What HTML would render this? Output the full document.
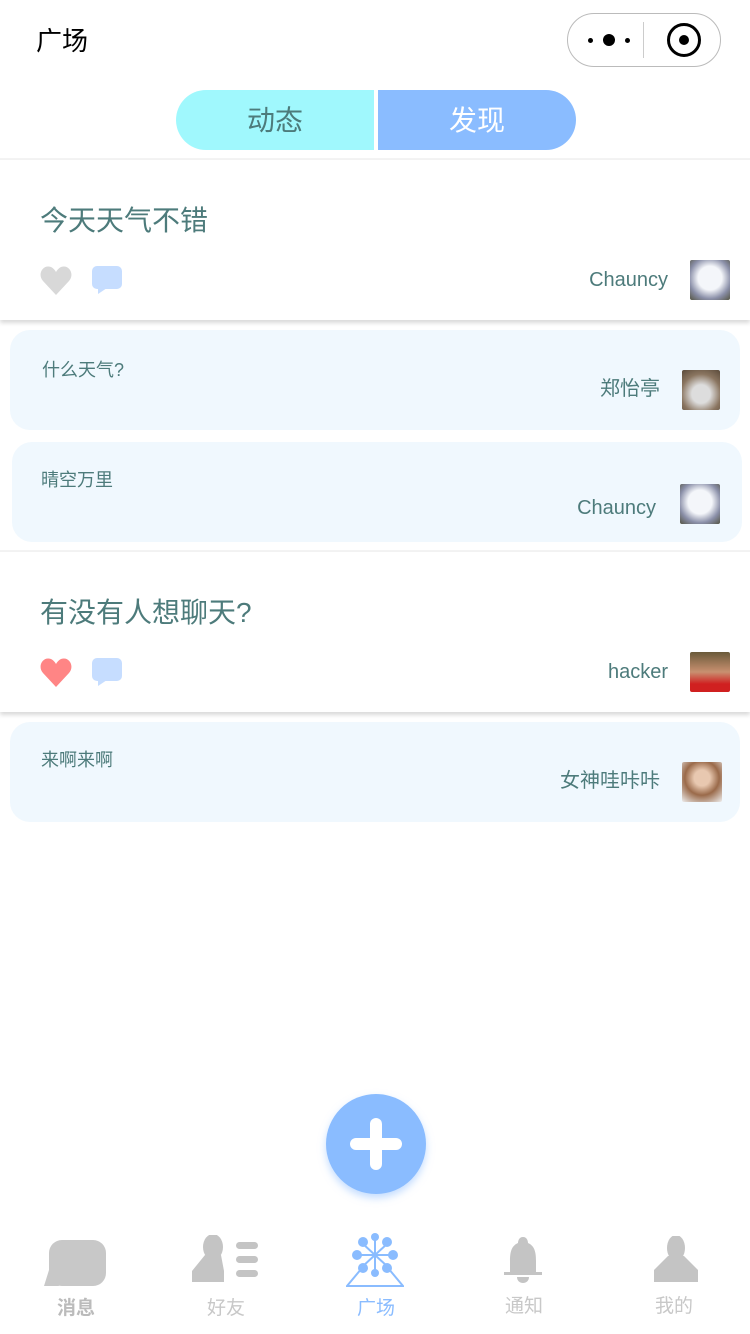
<!DOCTYPE html>
<html><head><meta charset="utf-8"><style>
*{margin:0;padding:0;box-sizing:border-box}
body{width:750px;height:1334px;background:#fff;position:relative;overflow:hidden;font-family:"Liberation Sans","Noto Sans CJK SC",sans-serif;color:#4d7b7b}
.a{position:absolute}
.t{white-space:nowrap;line-height:1}
.av{position:absolute;border-radius:2px}
.cm{position:absolute;background:#f0f8fe;border-radius:20px}
.lbl{position:absolute;top:1299px;font-size:19px;color:#c8c8c8;width:80px;text-align:center;line-height:1}
</style></head><body>
<div class="a t" style="left:36px;top:28px;font-size:26px;color:#000">广场</div>
<div class="a" style="left:567px;top:13px;width:154px;height:54px;border:1px solid #bbb;border-radius:27px"></div>
<div class="a" style="left:588px;top:38px;width:5px;height:5px;border-radius:50%;background:#000"></div>
<div class="a" style="left:603px;top:34px;width:12px;height:12px;border-radius:50%;background:#000"></div>
<div class="a" style="left:625px;top:38px;width:5px;height:5px;border-radius:50%;background:#000"></div>
<div class="a" style="left:643px;top:22px;width:1px;height:36px;background:#ccc"></div>
<div class="a" style="left:667px;top:23px;width:34px;height:34px;border-radius:50%;border:3px solid #000"></div>
<div class="a" style="left:679px;top:35px;width:10px;height:10px;border-radius:50%;background:#000"></div>

<div class="a" style="left:176px;top:90px;width:198px;height:60px;background:#a0f8fd;border-radius:30px 0 0 30px;font-size:28px;text-align:center;line-height:62px;color:#4d7b7b">动态</div>
<div class="a" style="left:378px;top:90px;width:198px;height:60px;background:#8abcff;border-radius:0 30px 30px 0;font-size:28px;text-align:center;line-height:62px;color:#fff">发现</div>
<div class="a" style="left:0;top:158px;width:750px;height:2px;background:#f3f3f3"></div>

<div class="a" style="left:0;top:160px;width:750px;height:160px;box-shadow:0 3px 4px rgba(0,0,0,.15);background:#fff"></div>
<div class="a t" style="left:40px;top:207px;font-size:28px">今天天气不错</div>
<svg class="a" style="left:40px;top:266px" width="32" height="29" viewBox="0 0 32 29"><path d="M16 29 L3 15 C-3 8 3 -2 11 1 C13 2 15 4 16 6 C17 4 19 2 21 1 C29 -2 35 8 29 15 Z" fill="#d8d8d8"/></svg>
<svg class="a" style="left:92px;top:266px" width="30" height="28" viewBox="0 0 30 28"><rect width="30" height="23" rx="5" fill="#c6ddff"/><path d="M6 22 L6 28 L15 22Z" fill="#c6ddff"/></svg>
<div class="a t" style="right:82px;top:270px;font-size:20px">Chauncy</div>
<div class="av" style="left:690px;top:260px;width:40px;height:40px;background:radial-gradient(circle at 50% 45%,#f4f6fa 40%,#8a8fa8 70%,#554)"></div>

<div class="cm" style="left:10px;top:330px;width:730px;height:100px"></div>
<div class="a t" style="left:42px;top:361px;font-size:18px">什么天气?</div>
<div class="a t" style="right:90px;top:379px;font-size:20px">郑怡亭</div>
<div class="av" style="left:682px;top:370px;width:38px;height:40px;background:radial-gradient(circle at 50% 60%,#ddd 30%,#8a7560 65%,#5a4a3a)"></div>

<div class="cm" style="left:12px;top:442px;width:730px;height:100px"></div>
<div class="a t" style="left:41px;top:471px;font-size:18px">晴空万里</div>
<div class="a t" style="right:94px;top:498px;font-size:20px">Chauncy</div>
<div class="av" style="left:680px;top:484px;width:40px;height:40px;background:radial-gradient(circle at 50% 45%,#f4f6fa 40%,#8a8fa8 70%,#554)"></div>
<div class="a" style="left:0;top:550px;width:750px;height:2px;background:#f3f3f3"></div>

<div class="a" style="left:0;top:552px;width:750px;height:160px;box-shadow:0 3px 4px rgba(0,0,0,.15);background:#fff"></div>
<div class="a t" style="left:40px;top:599px;font-size:28px">有没有人想聊天?</div>
<svg class="a" style="left:40px;top:658px" width="32" height="29" viewBox="0 0 32 29"><path d="M16 29 L3 15 C-3 8 3 -2 11 1 C13 2 15 4 16 6 C17 4 19 2 21 1 C29 -2 35 8 29 15 Z" fill="#ff8585"/></svg>
<svg class="a" style="left:92px;top:658px" width="30" height="28" viewBox="0 0 30 28"><rect width="30" height="23" rx="5" fill="#c6ddff"/><path d="M6 22 L6 28 L15 22Z" fill="#c6ddff"/></svg>
<div class="a t" style="right:82px;top:662px;font-size:20px">hacker</div>
<div class="av" style="left:690px;top:652px;width:40px;height:40px;background:linear-gradient(#6a5a3a,#c89070 50%,#d02020 80%)"></div>

<div class="cm" style="left:10px;top:722px;width:730px;height:100px"></div>
<div class="a t" style="left:41px;top:751px;font-size:18px">来啊来啊</div>
<div class="a t" style="right:90px;top:771px;font-size:20px">女神哇咔咔</div>
<div class="av" style="left:682px;top:762px;width:40px;height:40px;background:radial-gradient(circle at 50% 40%,#e8c8b0 25%,#9a6a4a 55%,#eee)"></div>

<div class="a" style="left:326px;top:1094px;width:100px;height:100px;border-radius:50%;background:#8abcff;box-shadow:0 4px 8px rgba(138,188,255,.5)"></div>
<div class="a" style="left:350px;top:1138px;width:52px;height:12px;border-radius:6px;background:#fff"></div>
<div class="a" style="left:370px;top:1118px;width:12px;height:52px;border-radius:6px;background:#fff"></div>

<svg class="a" style="left:44px;top:1240px" width="62" height="46" viewBox="0 0 62 46"><rect x="5" y="0" width="57" height="46" rx="13" fill="#c8c8c8"/><path d="M5 30 L0 46 L15 46Z" fill="#c8c8c8"/></svg>
<svg class="a" style="left:192px;top:1235px" width="68" height="47" viewBox="0 0 68 47"><ellipse cx="21" cy="12" rx="10" ry="13" fill="#c4c4c4"/><path d="M13 20 L0 36 V47 H32 V36 L29 20Z" fill="#c4c4c4"/><rect x="44" y="7" width="22" height="7" rx="3.5" fill="#c4c4c4"/><rect x="44" y="21" width="22" height="7" rx="3.5" fill="#c4c4c4"/><rect x="44" y="35" width="22" height="7" rx="3.5" fill="#c4c4c4"/></svg>
<svg class="a" style="left:346px;top:1233px" width="58" height="54" viewBox="0 0 58 54"><g stroke="#8abcff" stroke-width="2" fill="none"><line x1="29" y1="5" x2="29" y2="37"/><line x1="12" y1="22" x2="46" y2="22"/><line x1="16" y1="10" x2="42" y2="34"/><line x1="42" y1="10" x2="16" y2="34"/><path d="M16 35 L1 53 H57 L42 35"/></g><g fill="#8abcff"><circle cx="29" cy="4" r="4"/><circle cx="17" cy="9" r="5"/><circle cx="41" cy="9" r="5"/><circle cx="11" cy="22" r="5"/><circle cx="47" cy="22" r="5"/><circle cx="17" cy="35" r="5"/><circle cx="41" cy="35" r="5"/><circle cx="29" cy="40" r="4"/></g></svg>
<svg class="a" style="left:504px;top:1237px" width="38" height="46" viewBox="0 0 38 46"><path d="M19 0 C15 0 14 4 14 6 C7 9 6 16 6 24 V36 H32 V24 C32 16 31 9 24 6 C24 4 23 0 19 0Z" fill="#c4c4c4"/><rect x="0" y="35" width="38" height="3" fill="#c4c4c4"/><path d="M13 40 H25 C25 44 22 46 19 46 C16 46 13 44 13 40Z" fill="#c4c4c4"/></svg>
<svg class="a" style="left:654px;top:1236px" width="44" height="46" viewBox="0 0 44 46"><ellipse cx="22" cy="12" rx="9" ry="13" fill="#c4c4c4"/><path d="M14 20 L0 34 V46 H44 V34 L30 20Z" fill="#c4c4c4"/></svg>
<div class="lbl" style="left:36px;color:#bbb;font-weight:bold">消息</div>
<div class="lbl" style="left:186px">好友</div>
<div class="lbl" style="left:336px;color:#8abcff">广场</div>
<div class="lbl" style="left:484px;top:1297px">通知</div>
<div class="lbl" style="left:634px;top:1297px">我的</div>
</body></html>
